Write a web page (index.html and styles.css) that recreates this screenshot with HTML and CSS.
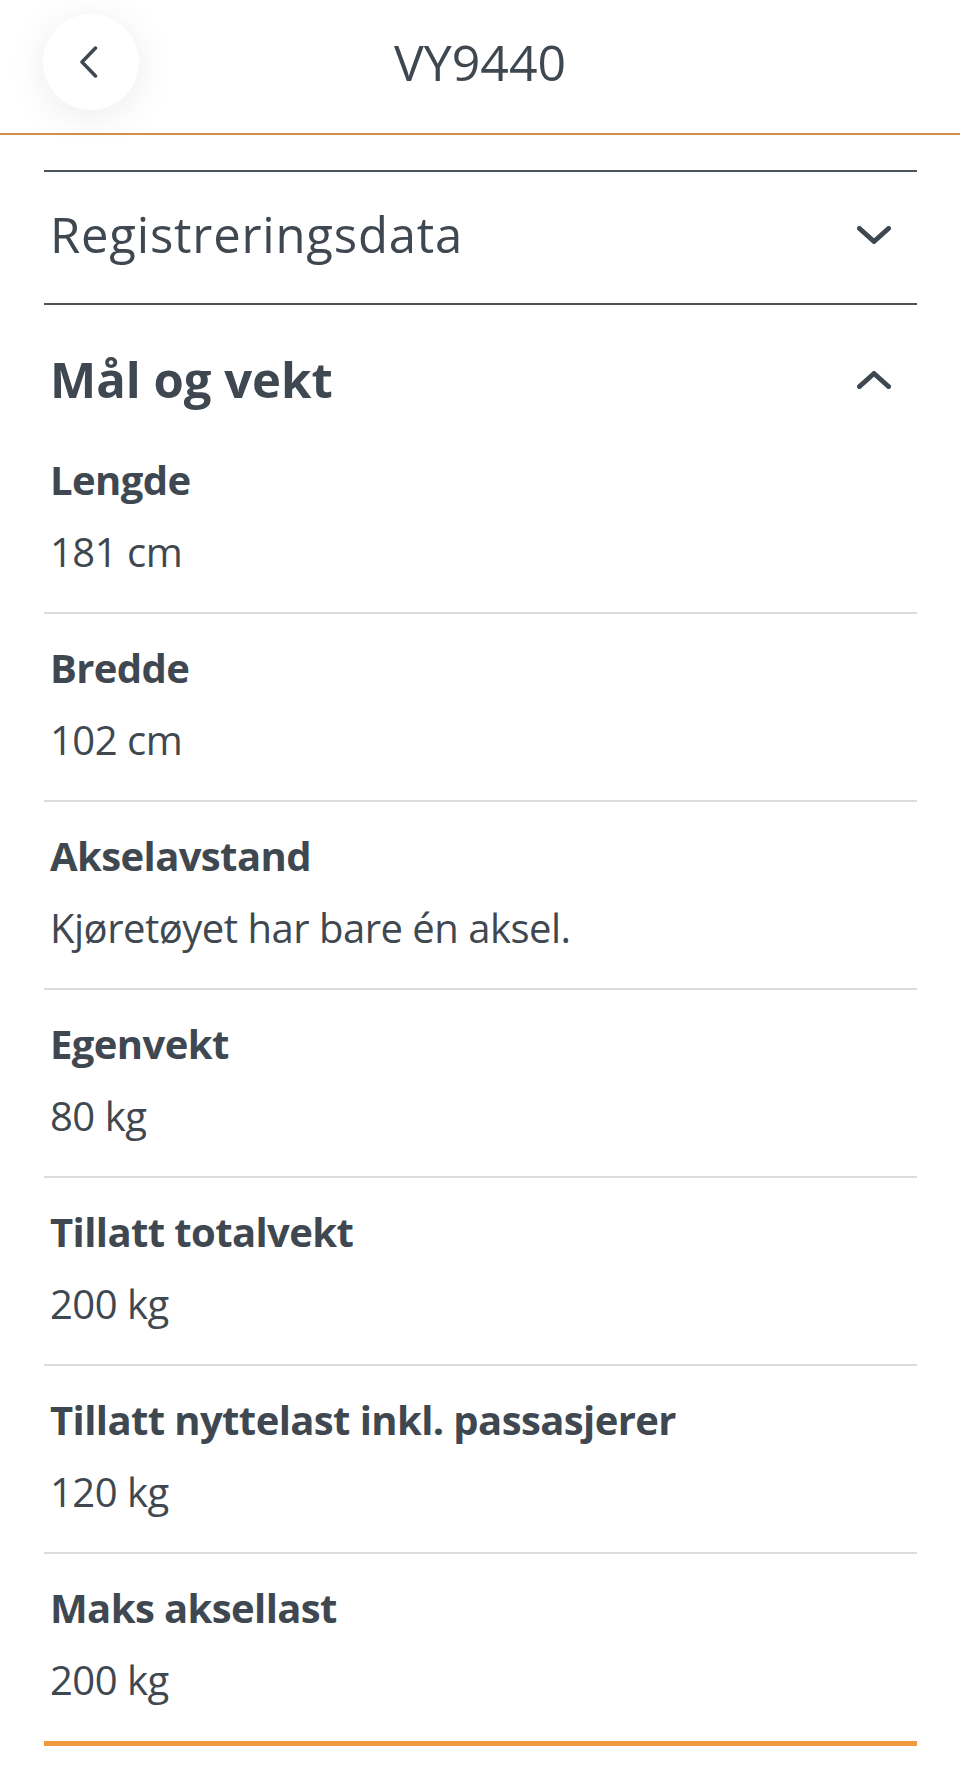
FILE: index.html
```html
<!DOCTYPE html>
<html lang="no">
<head>
  <meta charset="UTF-8" />
  <title>VY9440</title>
  <meta name="viewport" content="width=device-width, initial-scale=1.0" />
  <link rel="stylesheet" href="styles.css">
</head>
<body>

<header class="topbar">
  <button class="back" aria-label="Tilbake">
    <svg width="18" height="32" viewBox="0 0 18 32">
      <polyline points="15.5,2 2,16 15.5,30" />
    </svg>
  </button>
  <h1 class="title">VY9440</h1>
</header>

<main class="content">
  <section class="panel panel-closed">
    <div class="panel-head">
      <h2 class="panel-title">Registreringsdata</h2>
      <svg class="chev" width="34" height="18" viewBox="0 0 34 18">
        <polyline points="2.5,2.5 17,15.5 31.5,2.5" />
      </svg>
    </div>
  </section>

  <section class="panel panel-open">
    <div class="panel-head">
      <h2 class="panel-title">Mål og vekt</h2>
      <svg class="chev" width="34" height="18" viewBox="0 0 34 18">
        <polyline points="2.5,15.5 17,2.5 31.5,15.5" />
      </svg>
    </div>

    <dl class="facts">
      <div class="fact"><dt>Lengde</dt><dd>181 cm</dd></div>
      <div class="fact"><dt>Bredde</dt><dd>102 cm</dd></div>
      <div class="fact"><dt>Akselavstand</dt><dd>Kjøretøyet har bare én aksel.</dd></div>
      <div class="fact"><dt>Egenvekt</dt><dd>80 kg</dd></div>
      <div class="fact"><dt>Tillatt totalvekt</dt><dd>200 kg</dd></div>
      <div class="fact"><dt>Tillatt nyttelast inkl. passasjerer</dt><dd>120 kg</dd></div>
      <div class="fact"><dt>Maks aksellast</dt><dd>200 kg</dd></div>
    </dl>
  </section>
</main>

</body>
</html>
```

FILE: styles.css
```css
body {
  margin: 0;
  font-family: "Open Sans", Lato, sans-serif;
  color: #3f4850;
  background: #fff;
}

.topbar {
  display: grid;
  grid-template-columns: 1fr auto 1fr;
  align-items: center;
  height: 124px;
  padding-bottom: 9px;
  border-bottom: 2px solid #cf9248;
}

.back {
  justify-self: start;
  margin-left: 43px;
  width: 96px;
  height: 96px;
  border: none;
  border-radius: 50%;
  background: #fff;
  box-shadow: 0 6px 40px rgba(0,0,0,0.08);
  display: flex;
  align-items: center;
  justify-content: center;
  padding: 0 4px 0 0;
  cursor: pointer;
}

.back polyline,
.chev polyline {
  fill: none;
  stroke: #3f4850;
  stroke-linecap: round;
  stroke-linejoin: round;
}

.back polyline {
  stroke-width: 3.5;
}

.chev polyline {
  stroke-width: 5;
}

.title {
  margin: 0;
  font-size: 50px;
  font-weight: 400;
  line-height: 1;
}

.content {
  padding: 35px 43px 0 44px;
}

.panel-closed {
  border-top: 2px solid #4b545a;
  border-bottom: 2px solid #4b545a;
}

.panel-open {
  border-bottom: 5px solid #f19a3d;
}

.panel-head {
  display: flex;
  justify-content: space-between;
  align-items: center;
  padding: 33px 26px 39px 6px;
}

.panel-title {
  margin: 0;
  font-size: 49px;
  line-height: 59px;
  font-weight: 400;
  letter-spacing: 0.8px;
}

.panel-open .panel-head {
  padding-top: 45px;
  padding-bottom: 17px;
}

.panel-open .panel-title {
  font-weight: 700;
  letter-spacing: 0;
}

.facts {
  margin: 0;
}

.fact {
  padding: 30px 0 36px 6px;
}

.fact + .fact {
  border-top: 2px solid #dcdcdc;
}

.fact:last-child {
  padding-bottom: 37px;
}

.fact dt {
  font-size: 40px;
  line-height: 48px;
  font-weight: 700;
  letter-spacing: -0.6px;
}

.fact dd {
  margin: 24px 0 0;
  font-size: 40px;
  line-height: 48px;
  letter-spacing: -0.5px;
}
```
